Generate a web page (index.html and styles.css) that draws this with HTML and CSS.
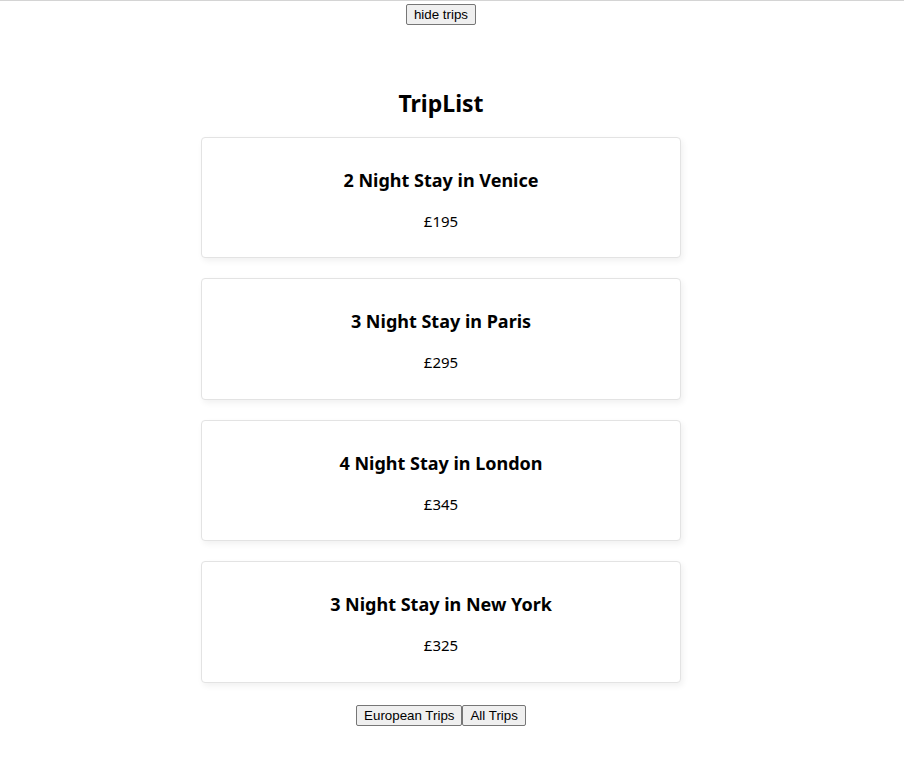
FILE: index.html
```html
<!DOCTYPE html>
<html>
<head>
<meta charset="utf-8">
<link rel="stylesheet" href="styles.css">
</head>
<body>
<div class="page">
  <div class="topbar">
    <button class="btn">hide trips</button>
  </div>
  <main class="app">
    <h1 class="title">TripList</h1>
    <ul class="trips">
      <li class="card"><h3 class="card-title">2 Night Stay in Venice</h3><p class="price">£195</p></li>
      <li class="card"><h3 class="card-title">3 Night Stay in Paris</h3><p class="price">£295</p></li>
      <li class="card"><h3 class="card-title">4 Night Stay in London</h3><p class="price">£345</p></li>
      <li class="card"><h3 class="card-title">3 Night Stay in New York</h3><p class="price">£325</p></li>
    </ul>
    <div class="filters">
      <button class="btn">European Trips</button><button class="btn">All Trips</button>
    </div>
  </main>
</div>
</body>
</html>
```
FILE: styles.css
```css
html, body {
  margin: 0;
  padding: 0;
  background: #fff;
}
body {
  border-top: 1px solid #d4d4d4;
  font-family: "Noto Sans", "Open Sans", sans-serif;
  color: #000;
}
.page {
  width: 882px;
}
.topbar {
  text-align: center;
  padding-top: 1px;
}
.btn {
  font-family: "Liberation Sans", Arial, sans-serif;
  font-size: 13.33px;
  height: 21px;
  padding: 1px 7px;
  margin: 0;
  border: 1px solid #767676;
  border-radius: 2px;
  background: #efefef;
  color: #000;
  line-height: 15px;
}
.app {
  display: flex;
  flex-direction: column;
  align-items: center;
}
.title {
  font-size: 23px;
  font-weight: 700;
  line-height: 32px;
  margin: 62px 0 18px;
}
.trips {
  list-style: none;
  margin: 0;
  padding: 0;
  width: 480px;
  display: flex;
  flex-direction: column;
  gap: 20px;
}
.card {
  box-sizing: border-box;
  height: 121.4px;
  border: 1px solid #e3e3e3;
  border-radius: 4px;
  box-shadow: 2px 3px 6px rgba(0, 0, 0, 0.06);
  padding: 30px 20px 0;
  text-align: center;
  background: #fff;
}
.card-title {
  margin: 0;
  font-size: 18px;
  font-weight: 700;
  line-height: 24px;
}
.price {
  margin: 19px 0 0;
  font-size: 15px;
  line-height: 20px;
}
.filters {
  margin-top: 22px;
  display: flex;
}
```
